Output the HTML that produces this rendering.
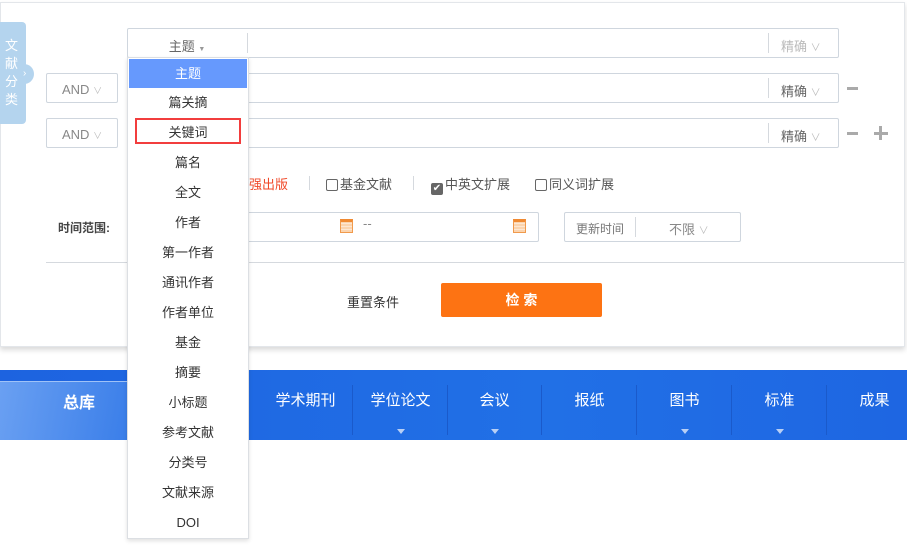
<!DOCTYPE html>
<html><head><meta charset="utf-8"><style>
*{margin:0;padding:0;box-sizing:border-box}
body{width:907px;height:545px;background:#fff;position:relative;overflow:hidden;font-family:"Liberation Sans","Noto Sans CJK SC",sans-serif;font-size:13px;color:#333}
.a{position:absolute}
.card{left:0;top:2px;width:905px;height:345px;border:1px solid #e3e6ea;box-shadow:0 3px 5px rgba(0,0,0,.15);background:#fff}
.box{border:1px solid #cfd6de;border-radius:2px;background:#fff}
.sep{width:1px;background:#d5d9de}
.g{color:#999}
.chk{display:inline-block;width:12px;height:12px;border:1px solid #666;border-radius:2px;vertical-align:-2px;margin-right:2px}
.nav{left:0;top:370px;width:907px;height:70px;background:linear-gradient(90deg,#1d63e0,#2170e6 60%,#1e66e2)}
.ni{position:absolute;top:0;height:70px;width:95px;color:#fff;font-size:15px;text-align:center;line-height:62px}
.ni i{position:absolute;left:44px;top:59px;border:4px solid transparent;border-top:5px solid #b8cff5}
.ns{position:absolute;top:15px;width:1px;height:50px;background:#1a5acb}
.dd{left:127px;top:57px;width:122px;height:482px;background:#fff;border:1px solid #dcdfe3;box-shadow:0 2px 4px rgba(0,0,0,.12)}
.dd div{height:30px;line-height:30px;text-align:center;font-size:13px;color:#333}
</style></head><body>
<div class="a card"></div>
<div class="a" style="left:0;top:22px;width:26px;height:102px;background:#b4d4ee;border-radius:0 4px 4px 0;color:#fff;font-size:13px;line-height:18px;padding:15px 0 0 5px">文<br>献<br>分<br>类</div>
<div class="a" style="left:20px;top:64px;width:14px;height:20px;background:#b4d4ee;border-radius:0 10px 10px 0;color:#fff;font-size:10px;line-height:20px;padding-left:3px">›</div>

<div class="a box" style="left:127px;top:28px;width:712px;height:30px"></div>
<div class="a g" style="left:127px;top:36px;width:120px;text-align:center;color:#666">主题 <span style="font-size:7px;color:#999">▼</span></div>
<div class="a sep" style="left:247px;top:33px;height:20px"></div>
<div class="a sep" style="left:768px;top:33px;height:20px"></div>
<div class="a" style="left:781px;top:36px;color:#bbb">精确 <span style="font-size:10px">∨</span></div>

<div class="a box" style="left:46px;top:73px;width:72px;height:30px"></div>
<div class="a g" style="left:62px;top:82px;color:#888">AND <span style="font-size:9px;color:#bbb">∨</span></div>
<div class="a box" style="left:127px;top:73px;width:712px;height:30px"></div>
<div class="a sep" style="left:768px;top:78px;height:20px"></div>
<div class="a" style="left:781px;top:81px;color:#666">精确 <span style="font-size:10px;color:#bbb">∨</span></div>
<div class="a" style="left:847px;top:87px;width:11px;height:3px;background:#aaa"></div>

<div class="a box" style="left:46px;top:118px;width:72px;height:30px"></div>
<div class="a g" style="left:62px;top:127px;color:#888">AND <span style="font-size:9px;color:#bbb">∨</span></div>
<div class="a box" style="left:127px;top:118px;width:712px;height:30px"></div>
<div class="a sep" style="left:768px;top:123px;height:20px"></div>
<div class="a" style="left:781px;top:126px;color:#666">精确 <span style="font-size:10px;color:#bbb">∨</span></div>
<div class="a" style="left:847px;top:132px;width:11px;height:3px;background:#aaa"></div>
<div class="a" style="left:874px;top:132px;width:14px;height:3px;background:#aaa"></div>
<div class="a" style="left:879px;top:126px;width:3px;height:14px;background:#aaa"></div>

<div class="a" style="left:236px;top:174px;color:#f04a2a">加强出版</div>
<div class="a sep" style="left:309px;top:176px;height:14px"></div>
<div class="a" style="left:326px;top:174px;color:#555"><span class="chk"></span>基金文献</div>
<div class="a sep" style="left:413px;top:176px;height:14px"></div>
<div class="a" style="left:431px;top:174px;color:#555"><span class="chk" style="background:#666;color:#fff;font-size:10px;line-height:10px;text-align:center">✔</span>中英文扩展</div>
<div class="a" style="left:535px;top:174px;color:#555"><span class="chk"></span>同义词扩展</div>

<div class="a" style="left:58px;top:219px;font-size:12px;font-weight:bold;color:#444">时间范围:</div>
<div class="a box" style="left:127px;top:212px;width:412px;height:30px"></div>
<div class="a" style="left:340px;top:219px;width:13px;height:14px;border:1px solid #f19a4c;background:repeating-linear-gradient(0deg,#fbd4ae 0 2px,#fde7d2 2px 3px);border-top:3px solid #f08a32"></div>
<div class="a" style="left:363px;top:216px;color:#888">--</div>
<div class="a" style="left:513px;top:219px;width:13px;height:14px;border:1px solid #f19a4c;background:repeating-linear-gradient(0deg,#fbd4ae 0 2px,#fde7d2 2px 3px);border-top:3px solid #f08a32"></div>
<div class="a box" style="left:564px;top:212px;width:177px;height:30px"></div>
<div class="a" style="left:576px;top:220px;font-size:12px;color:#777">更新时间</div>
<div class="a sep" style="left:635px;top:217px;height:20px"></div>
<div class="a" style="left:669px;top:219px;color:#888">不限 <span style="font-size:10px;color:#bbb">∨</span></div>
<div class="a" style="left:46px;top:262px;width:858px;height:1px;background:#d5d9de"></div>
<div class="a" style="left:347px;top:292px;color:#333">重置条件</div>
<div class="a" style="left:441px;top:283px;width:161px;height:34px;background:#fd7313;border-radius:2px;color:#fff;font-weight:bold;text-align:center;line-height:34px;font-size:14px">检 索</div>

<div class="a nav">
<div class="ni" style="left:258px">学术期刊</div>
<div class="ns" style="left:352px"></div>
<div class="ni" style="left:353px">学位论文<i></i></div>
<div class="ns" style="left:447px"></div>
<div class="ni" style="left:447px">会议<i></i></div>
<div class="ns" style="left:541px"></div>
<div class="ni" style="left:542px">报纸</div>
<div class="ns" style="left:636px"></div>
<div class="ni" style="left:637px">图书<i></i></div>
<div class="ns" style="left:731px"></div>
<div class="ni" style="left:732px">标准<i></i></div>
<div class="ns" style="left:826px"></div>
<div class="ni" style="left:827px">成果</div>
</div>
<div class="a" style="left:0;top:381px;width:128px;height:59px;background:linear-gradient(100deg,#6aa0f2,#3a7ee9);border-top:1px solid #9fc2f7;color:#fff;font-weight:bold;font-size:16px;line-height:44px;text-align:center;padding-left:30px">总库</div>

<div class="a dd">
<div style="background:#6699fd;color:#fff;margin:1px 1px 0;height:29px">主题</div>
<div>篇关摘</div><div>关键词</div><div>篇名</div><div>全文</div><div>作者</div><div>第一作者</div><div>通讯作者</div><div>作者单位</div><div>基金</div><div>摘要</div><div>小标题</div><div>参考文献</div><div>分类号</div><div>文献来源</div><div>DOI</div>
</div>
<div class="a" style="left:135px;top:118px;width:106px;height:26px;border:2px solid #f23d3d"></div>
</body></html>
